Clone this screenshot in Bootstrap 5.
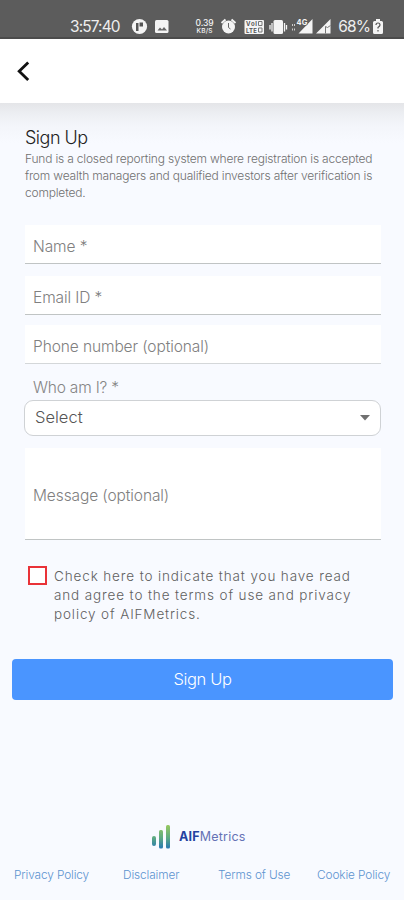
<!DOCTYPE html>
<html lang="en">
<head>
<meta charset="utf-8">
<meta name="viewport" content="width=device-width, initial-scale=1">
<title>Sign Up</title>
<link href="https://cdn.jsdelivr.net/npm/bootstrap@5.3.0/dist/css/bootstrap.min.css" rel="stylesheet">
<style>
body{font-family:Inter,"Liberation Sans",sans-serif;font-weight:300;background:#f8faff;color:#777;height:900px;overflow:hidden}
.status-bar{height:39px;background:#5c5c5c;border-bottom:2px solid #4b4b4b;color:#fff;padding:13px 20px 0 70px;font-size:15.5px;line-height:27px}
.status-bar svg{display:block;flex:none}
.status-bar span{line-height:27px;white-space:nowrap;font-weight:400;color:#eee}
.clock{width:61.5px;letter-spacing:-.9px}
.battery-level{width:34px;margin-left:7px;letter-spacing:-.8px}
.app-header{height:63.5px;padding-left:16px}
.page-body{background:linear-gradient(#e4e5e8 0,#eceef2 10px,#f3f5fa 22px,#f8faff 40px);height:797.5px}
.intro{padding:22px 24px 0 25px}
.intro h1{font-size:18px;line-height:25px;font-weight:300;color:#222;letter-spacing:-.5px}
.intro p{font-size:12px;line-height:17px;color:#707070;white-space:nowrap;letter-spacing:-.19px}
.form-area{padding:24px 23px 0 25px}
.line-field{height:39px;background:#fff;border:0;border-bottom:1.5px solid #c0c4c4;border-radius:0;padding:5px 8px 0;font-size:15.5px;line-height:34px;font-weight:300;color:#777;letter-spacing:-.1px}
.line-field::placeholder{color:#808080;opacity:1}
.email{margin-top:12px}
.thin{border-bottom:1px solid #d4d7d9;margin-top:10px;padding-top:6px}
.role-label{font-size:15.5px;line-height:22px;padding-left:8px;color:#858585;margin-top:13px;letter-spacing:-.2px}
.role-select{height:36px;border:1px solid #cfd2d5;border-radius:9px;background:#fff;padding:0 10px;font-size:16.5px;color:#555;margin:1px 0 0 -1px}
.message{height:92px;padding-top:4px;margin-top:12px}
.agree{padding:26px 0 0 3px}
.agree .agree-box{width:19px;height:19px;border:2px solid #e93238;border-radius:0;background:#fff;margin:0;flex:none}
.agree label{font-size:13.5px;line-height:19px;color:#606060;letter-spacing:.87px;margin:1px 0 0 7px;white-space:nowrap}
.submit{height:41px;margin:35px 11px 0 12px;background:#4a95ff;color:#fff;border:0;border-radius:4px;font-size:16.5px;font-weight:300;letter-spacing:-.4px}
.brand{margin:124px 0 0 152px;height:25px}
.brand span{font-size:12.5px;color:#6572b5;font-weight:400;line-height:25px;margin-left:8px;letter-spacing:.2px}
.brand b{color:#2442a0;font-weight:700}
.links{padding:17px 0 0 14px;font-size:11.8px;line-height:18px;letter-spacing:-.1px}
.links a{color:#5c93cf;text-decoration:none;white-space:nowrap;width:95px}
.links a:first-child{width:109px}
.links a:nth-child(3){width:99px}
.links a:last-child{width:auto}
</style>
</head>
<body>
<div class="status-bar d-flex align-items-start">
  <span class="clock">3:57:40</span>
  <svg width="200" height="26" viewBox="131.5 13 200 26" fill="#f4f4f4">
    <circle cx="140" cy="26.500" r="7.600"/>
    <path d="M136.500 31v-8h2.500v8zM140 22.500h3.500v4H140z" fill="#555"/>
    <rect x="155.500" y="20" width="13.500" height="13" rx="1.500"/>
    <path d="M158 30.500l2.500-3 2 2 2-2.500 3 3.500z" fill="#666"/>
    <text x="196" y="26" font-size="8.500" font-weight="500" textLength="18">0.39</text>
    <text x="197" y="33" font-size="6.500" font-weight="500" textLength="16">KB/S</text>
    <g><circle cx="229" cy="27" r="6.500"/><path d="M222 23l4-3.500M236 23l-4-3.500" stroke="#f4f4f4" stroke-width="2"/><path d="M229 23v4.500l2 1.500" stroke="#666" fill="none"/></g>
    <rect x="245" y="20" width="19.500" height="14" rx="1"/>
    <g fill="#555" font-weight="700" font-size="6"><text x="246.500" y="26.200" textLength="11">VoI</text><text x="246.500" y="32.500" textLength="11">LTE</text></g>
    <path d="M259 21.500h3.500v4H259zM259 28h3.500v4H259z" fill="none" stroke="#777"/>
    <rect x="274" y="20" width="9.500" height="14" rx="1.500"/>
    <path d="M272.500 23v8.500M285 23v8.500M270.500 25v4.500M287 25v4.500" stroke="#f4f4f4" stroke-width="1.300"/>
    <path d="M313 19v14.500h-14zM331 19v14.500h-14.500z"/>
    <path d="M293 24v2M293 28.500v2M295 24v2M295 28.500v2" stroke="#ccc"/>
    <text x="297" y="25" font-size="7.500" font-weight="700" stroke="#5c5c5c" stroke-width="1.500" paint-order="stroke" textLength="11">4G</text>
    <path d="M326 33.500v-7l2 1 3-2" stroke="#777" fill="none"/>
  </svg>
  <span class="battery-level">68%</span>
  <svg width="12" height="26" viewBox="0 0 12 26" fill="#f4f4f4"><path d="M4 6h4v2h1.500Q11 8 11 9.500v10Q11 21 9.500 21h-7Q1 21 1 19.500v-10Q1 8 2.500 8H4z"/><path d="M4 12q0-2 2-2t2 2q0 1-2 2.500v1M6 17v1.500" fill="none" stroke="#555" stroke-width="1.200"/></svg>
</div>
<header class="app-header bg-white d-flex align-items-center">
  <svg width="14" height="22" viewBox="0 0 14 22" fill="none" stroke="#111" stroke-width="2.800"><path d="M12.200 2.500L3.200 11.200l9 8.800"/></svg>
</header>
<main class="page-body">
  <section class="intro">
    <h1 class="m-0">Sign Up</h1>
    <p class="m-0">Fund is a closed reporting system where registration is accepted<br>from wealth managers and qualified investors after verification is<br>completed.</p>
  </section>
  <form>
    <div class="form-area">
      <input class="form-control line-field" placeholder="Name *">
      <input class="form-control line-field email" placeholder="Email ID *">
      <input class="form-control line-field thin" placeholder="Phone number (optional)">
      <label class="role-label d-block">Who am I? *</label>
      <div class="role-select d-flex align-items-center justify-content-between"><span>Select</span>
        <svg width="10" height="6" viewBox="0 0 10 6"><path d="M0 0h10L5 5.500z" fill="#707070"/></svg></div>
      <input class="form-control line-field message" placeholder="Message (optional)">
      <div class="agree d-flex align-items-start">
        <input class="form-check-input agree-box rounded-0" type="checkbox" id="agree">
        <label for="agree">Check here to indicate that you have read<br>and agree to the terms of use and privacy<br>policy of AIFMetrics.</label>
      </div>
    </div>
    <div class="d-flex"><button type="button" class="btn submit flex-fill p-0">Sign Up</button></div>
  </form>
  <footer>
    <div class="brand d-flex align-items-center">
      <svg width="19" height="25" viewBox="0 0 19 25"><defs><linearGradient id="bars" gradientUnits="userSpaceOnUse" x1="0" y1="0" x2="0" y2="25"><stop offset="0" stop-color="#9ccb5c"/><stop offset=".55" stop-color="#5daa83"/><stop offset="1" stop-color="#2475b5"/></linearGradient></defs><g fill="url(#bars)"><rect x="0" y="12" width="4" height="10" rx="2"/><rect x="7" y="6" width="4" height="18.500" rx="1.500"/><rect x="14" y="1" width="4" height="23.500" rx="1.500"/></g></svg>
      <span><b>AIF</b>Metrics</span>
    </div>
    <nav class="links d-flex"><a href="#">Privacy Policy</a><a href="#">Disclaimer</a><a href="#">Terms of Use</a><a href="#">Cookie Policy</a></nav>
  </footer>
</main>
<script src="https://cdn.jsdelivr.net/npm/bootstrap@5.3.0/dist/js/bootstrap.bundle.min.js"></script>
</body>
</html>
